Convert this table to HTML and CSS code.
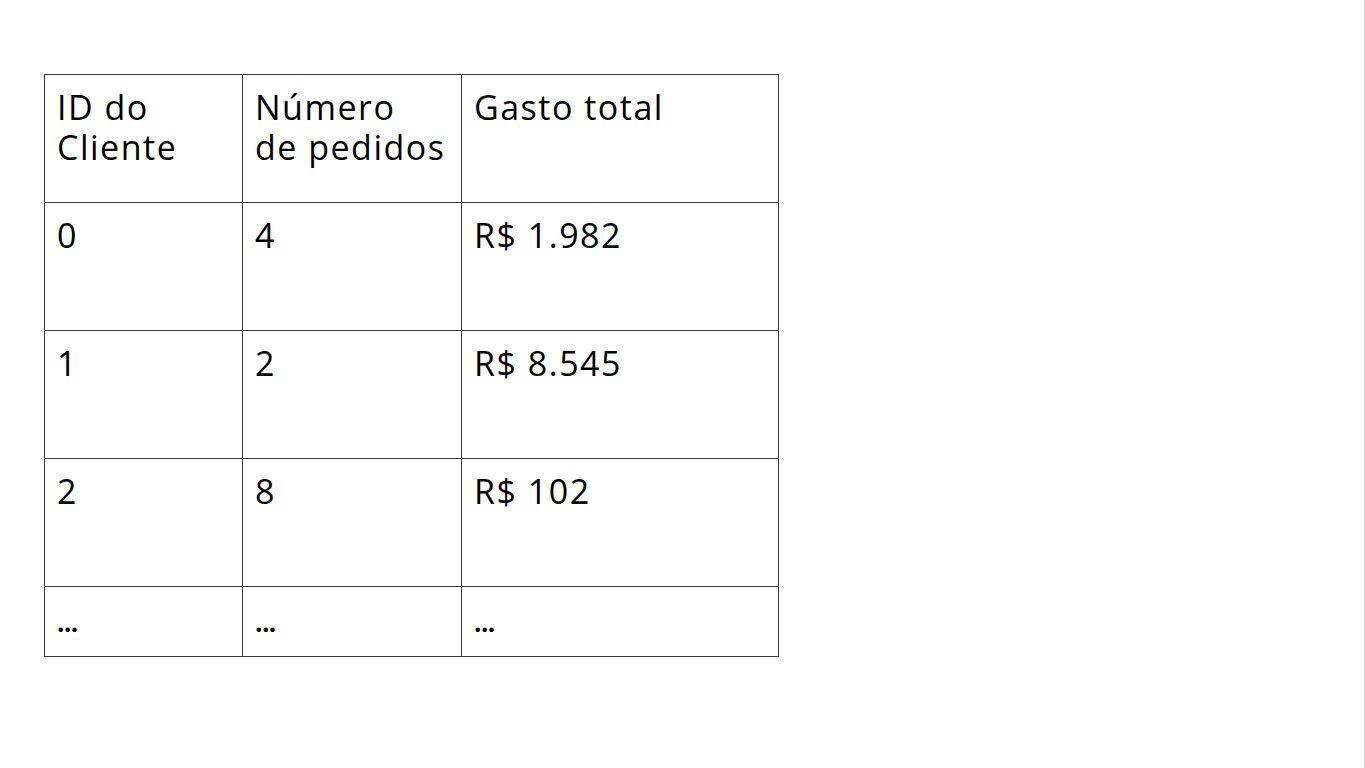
FILE: index.html
```html
<!DOCTYPE html>
<html lang="pt-BR">
<head>
<meta charset="utf-8">
<title>Tabela de clientes</title>
<link rel="stylesheet" href="styles.css">
</head>
<body>
<div class="page">
  <table class="data">
    <colgroup>
      <col class="c1">
      <col class="c2">
      <col class="c3">
    </colgroup>
    <tr class="row head">
      <td>ID do<br>Cliente</td>
      <td>Número<br>de pedidos</td>
      <td>Gasto total</td>
    </tr>
    <tr class="row">
      <td>0</td>
      <td>4</td>
      <td>R$ 1.982</td>
    </tr>
    <tr class="row">
      <td>1</td>
      <td>2</td>
      <td>R$ 8.545</td>
    </tr>
    <tr class="row">
      <td>2</td>
      <td>8</td>
      <td>R$ 102</td>
    </tr>
    <tr class="row last">
      <td><span class="dots">...</span></td>
      <td><span class="dots">...</span></td>
      <td><span class="dots">...</span></td>
    </tr>
  </table>
</div>
</body>
</html>
```
FILE: styles.css
```css
html, body {
  margin: 0;
  padding: 0;
  background: #ffffff;
}
.page {
  box-sizing: border-box;
  width: 1365px;
  height: 768px;
  padding: 74px 0 0 44px;
  border-right: 1px solid #d4d4d4;
  font-family: "Open Sans", "Liberation Sans", sans-serif;
  color: #000;
}
.data {
  border-collapse: collapse;
  table-layout: fixed;
  width: 734px;
}
.c1 { width: 198px; }
.c2 { width: 219px; }
.c3 { width: 317px; }
.data td {
  border: 1px solid #3a3a3a;
  vertical-align: top;
  padding: 12px 10px 0 12px;
  font-size: 34px;
  line-height: 40px;
  letter-spacing: 1.5px;
  box-sizing: border-box;
}
.row td { height: 128px; }
.row.last td { height: 70px; }
.dots {
  font-size: 26px;
  font-weight: 700;
  letter-spacing: -0.5px;
}
```
